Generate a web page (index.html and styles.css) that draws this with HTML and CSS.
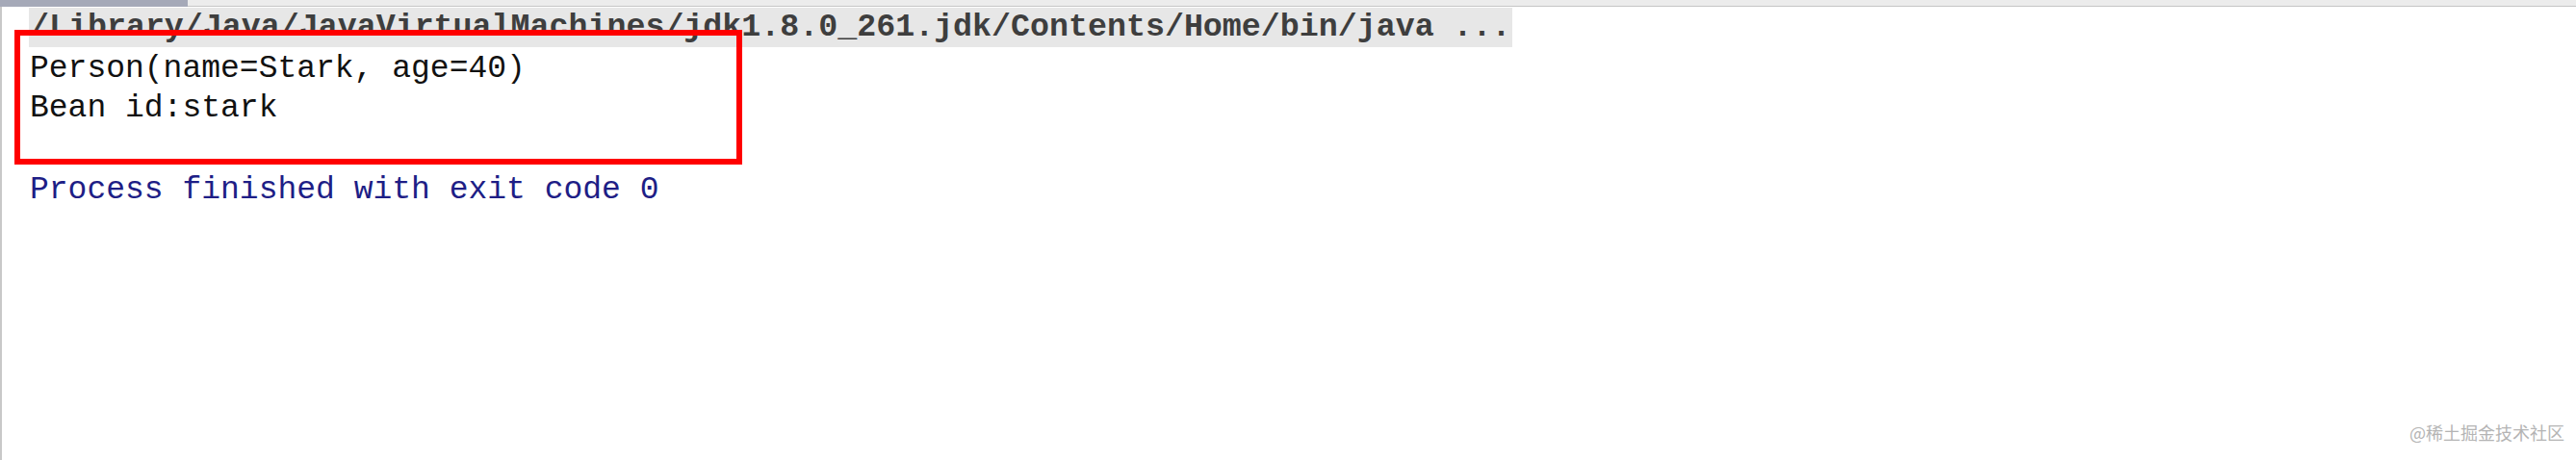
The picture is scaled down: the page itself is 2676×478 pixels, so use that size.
FILE: index.html
```html
<!DOCTYPE html>
<html lang="zh-CN">
<head>
<meta charset="utf-8">
<title>Console</title>
<link rel="stylesheet" href="styles.css">
</head>
<body>
<div class="window">
  <div class="topbar">
    <div class="topbar-tab"></div>
    <div class="topbar-rest"></div>
  </div>
  <div class="console">
    <div class="cmd-line"><span class="cmd">/Library/Java/JavaVirtualMachines/jdk1.8.0_261.jdk/Contents/Home/bin/java ...</span></div>
    <div class="out">Person(name=Stark, age=40)</div>
    <div class="out">Bean id:stark</div>
    <div class="out blank">&nbsp;</div>
    <div class="out exit">Process finished with exit code 0</div>
    <div class="highlight"></div>
  </div>
  <div class="watermark">@稀土掘金技术社区</div>
</div>
</body>
</html>
```

FILE: styles.css
```css
html, body {
  margin: 0;
  padding: 0;
  background: #ffffff;
}

.window {
  position: relative;
  width: 2676px;
  height: 478px;
  overflow: hidden;
  background: #ffffff;
}

.topbar {
  display: flex;
  height: 7px;
}

.topbar-tab {
  width: 195px;
  height: 7px;
  background: #a5a9b8;
}

.topbar-rest {
  flex: 1;
  height: 6px;
  background: #ececec;
  border-bottom: 1px solid #c6c6c6;
}

.console {
  position: relative;
  height: 471px;
  border-left: 2px solid #c8c8c8;
  padding: 1px 0 0 28px;
  box-sizing: border-box;
}

.cmd-line {
  height: 41px;
  margin-bottom: 2px;
}

.cmd {
  display: inline-block;
  background: #e7e7e7;
  color: #3e3e3e;
  font-family: "Liberation Mono", "Courier New", monospace;
  font-weight: bold;
  font-size: 33.3px;
  line-height: 41px;
  padding: 0 1px 0 1px;
  white-space: pre;
}

.out {
  font-family: "Liberation Mono", "Courier New", monospace;
  font-size: 33px;
  line-height: 41px;
  color: #111111;
  padding-left: 1px;
  white-space: pre;
}

.exit {
  color: #1e1e86;
  margin-top: 3px;
}

.highlight {
  position: absolute;
  left: 13px;
  top: 24px;
  width: 756px;
  height: 140px;
  border: 6px solid #ff0000;
  box-sizing: border-box;
}

.watermark {
  position: absolute;
  right: 12px;
  bottom: 19px;
  font-family: "Noto Sans CJK SC", "Noto Sans", sans-serif;
  font-size: 18px;
  line-height: 20px;
  color: #b4b4b4;
  white-space: nowrap;
}
```
